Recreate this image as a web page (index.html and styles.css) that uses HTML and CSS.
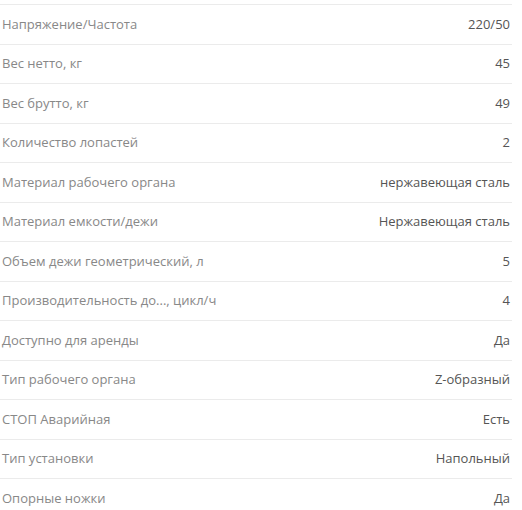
FILE: index.html
```html
<!DOCTYPE html>
<html lang="ru">
<head>
<meta charset="utf-8">
<link rel="stylesheet" href="styles.css">
</head>
<body>
<div class="specs">
  <div class="row"><span class="label">Напряжение/Частота</span><span class="value">220/50</span></div>
  <div class="row"><span class="label">Вес нетто, кг</span><span class="value">45</span></div>
  <div class="row"><span class="label">Вес брутто, кг</span><span class="value">49</span></div>
  <div class="row"><span class="label">Количество лопастей</span><span class="value">2</span></div>
  <div class="row"><span class="label">Материал рабочего органа</span><span class="value">нержавеющая сталь</span></div>
  <div class="row"><span class="label">Материал емкости/дежи</span><span class="value">Нержавеющая сталь</span></div>
  <div class="row"><span class="label">Объем дежи геометрический, л</span><span class="value">5</span></div>
  <div class="row"><span class="label">Производительность до..., цикл/ч</span><span class="value">4</span></div>
  <div class="row"><span class="label">Доступно для аренды</span><span class="value">Да</span></div>
  <div class="row"><span class="label">Тип рабочего органа</span><span class="value">Z-образный</span></div>
  <div class="row"><span class="label">СТОП Аварийная</span><span class="value">Есть</span></div>
  <div class="row"><span class="label">Тип установки</span><span class="value">Напольный</span></div>
  <div class="row"><span class="label">Опорные ножки</span><span class="value">Да</span></div>
</div>
</body>
</html>
```
FILE: styles.css
```css
html, body {
  margin: 0;
  background: #fff;
}
body {
  padding-top: 4px;
  font-family: "Open Sans", "Noto Sans", sans-serif;
  font-size: 13px;
  line-height: 19.5px;
}
.specs {
  width: 512px;
}
.row {
  display: flex;
  justify-content: space-between;
  align-items: center;
  border-top: 1px solid #ebebeb;
  padding: 9.5px 2px 9.5px 2px;
}
.label {
  color: #888;
}
.value {
  color: #555;
  text-align: right;
}
```
